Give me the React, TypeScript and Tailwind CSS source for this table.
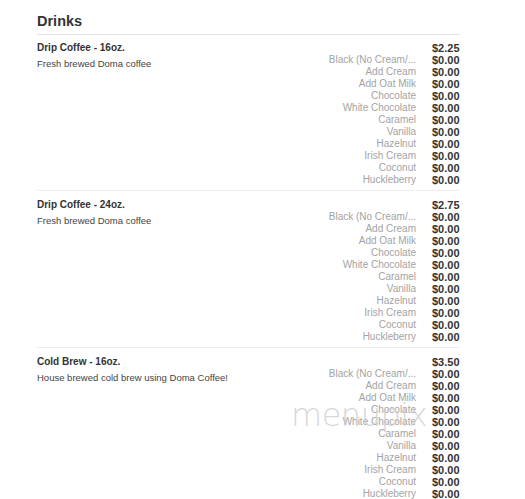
import React from "react";

const options = [
  "Black (No Cream/...",
  "Add Cream",
  "Add Oat Milk",
  "Chocolate",
  "White Chocolate",
  "Caramel",
  "Vanilla",
  "Hazelnut",
  "Irish Cream",
  "Coconut",
  "Huckleberry",
];

const items = [
  { name: "Drip Coffee - 16oz.", desc: "Fresh brewed Doma coffee", price: "$2.25" },
  { name: "Drip Coffee - 24oz.", desc: "Fresh brewed Doma coffee", price: "$2.75" },
  { name: "Cold Brew - 16oz.", desc: "House brewed cold brew using Doma Coffee!", price: "$3.50" },
];

export default function App() {
  return (
    <div
      className="relative w-[525px] h-[499px] overflow-hidden bg-white"
      style={{ fontFamily: "'Liberation Sans', Arial, sans-serif" }}
    >
      <div className="ml-[37px] w-[423px] pt-[13px]">
        <h2 className="text-[14.5px] leading-[17px] font-bold text-[#333] pb-[4px] border-b border-[#e3e3e3]">
          Drinks
        </h2>
        {items.map((it, i) => (
          <div
            key={i}
            className={`flex justify-between pb-[4px] ${i < items.length - 1 ? "border-b border-[#eeeeee]" : ""} ${i > 0 ? "pt-[8px]" : "pt-[7px]"}`}
          >
            <div>
              <div className="text-[10px] leading-[12px] font-bold text-[#333]">{it.name}</div>
              <div className="text-[9.5px] leading-[12px] text-[#444] mt-[4px]">{it.desc}</div>
            </div>
            <div className="grid grid-cols-[auto_28px] gap-x-[16px] text-right">
              <div />
              <div className="text-[11px] leading-[12px] font-bold text-[#333] text-left">{it.price}</div>
              {options.map((o) => (
                <React.Fragment key={o}>
                  <div className="text-[10px] leading-[12px] text-[#a3a3a3]">{o}</div>
                  <div className="text-[11px] leading-[12px] font-bold text-[#333] text-left">$0.00</div>
                </React.Fragment>
              ))}
            </div>
          </div>
        ))}
      </div>
      <div
        className="absolute left-[291px] top-[395px] text-[32px] leading-[40px] text-[#cfcfcf] opacity-80 tracking-[-0.5px]"
        style={{ fontFamily: "'DejaVu Sans', sans-serif", fontWeight: 200 }}
      >
        menupix
      </div>
    </div>
  );
}
